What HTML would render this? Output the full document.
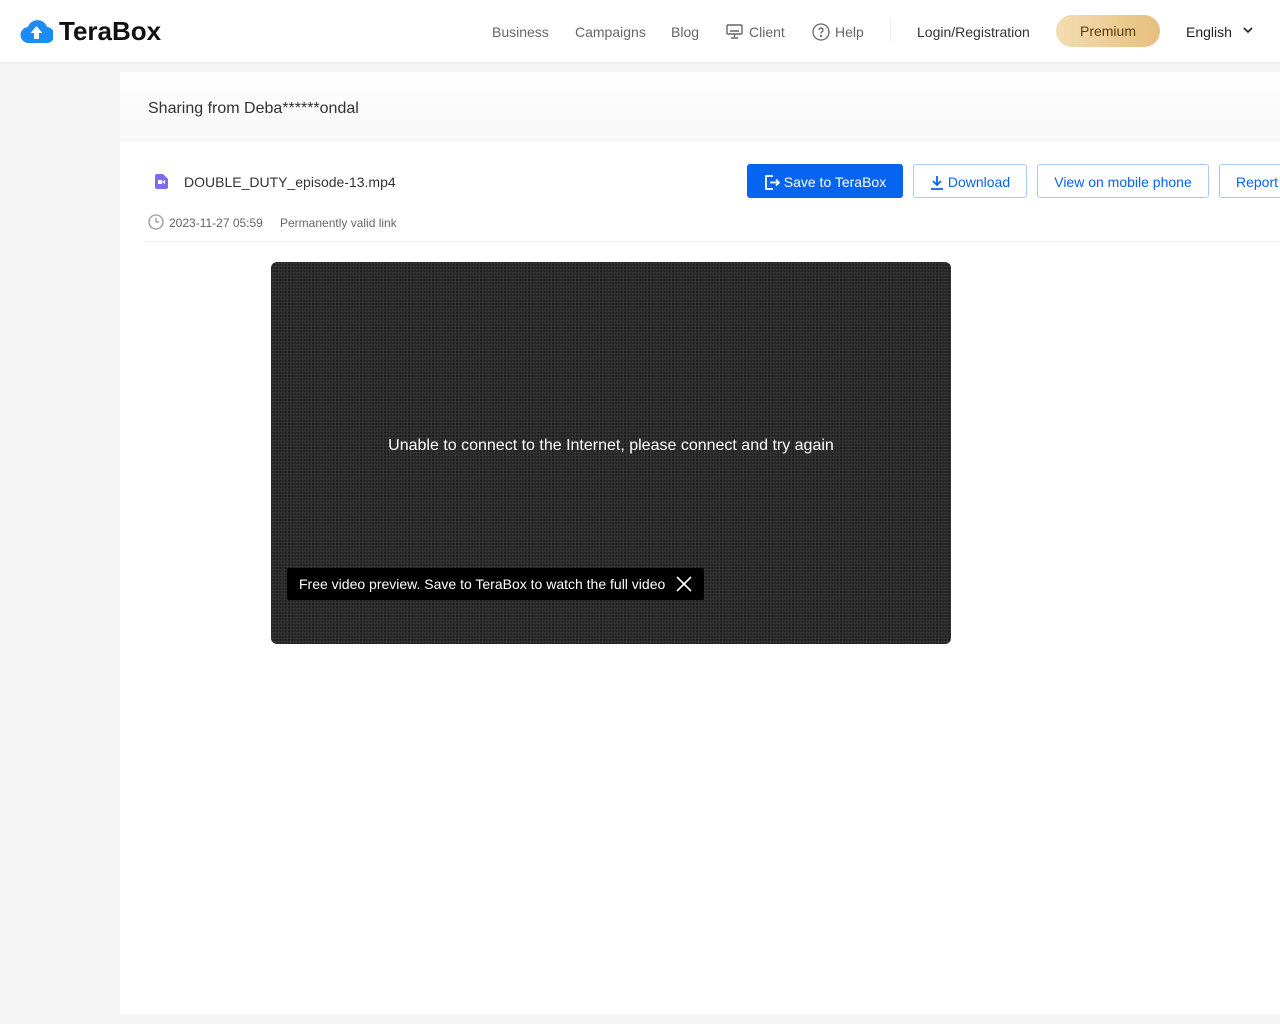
<!DOCTYPE html>
<html><head><meta charset="utf-8"><style>
*{margin:0;padding:0;box-sizing:border-box}
body{width:1280px;height:1024px;background:#f5f5f6;font-family:"Liberation Sans",sans-serif;position:relative;overflow:hidden}
.hdr{position:absolute;left:0;top:0;width:1280px;height:62px;background:#fff;box-shadow:0 1px 3px rgba(0,0,0,.05)}
.abs{position:absolute;white-space:nowrap}
.nav{font-size:14px;color:#666;top:24px}
.main{position:absolute;left:120px;top:72px;width:1160px;height:942px;background:#fff}
.top{position:absolute;left:0;top:0;width:1160px;height:70px;background:linear-gradient(#fff,#f7f7f8)}
.btn{position:absolute;top:164px;height:34px;border:1px solid #a8c8f5;border-radius:3px;color:#0664f0;font-size:14px;line-height:34px;text-align:center;background:#fff}
.btn svg{vertical-align:-3px;margin-right:4px}
.video{position:absolute;left:271px;top:262px;width:680px;height:382px;border-radius:6px;background:#262626;background-image:radial-gradient(#3a3a3a 1px,transparent 1px),radial-gradient(#1a1a1a 1px,transparent 1px);background-size:3px 3px,4px 4px}
</style></head><body>
<div class="hdr">
<svg class="abs" style="left:20px;top:17px" width="33" height="27" viewBox="0 0 33 27"><path d="M9 26a8 8 0 0 1-1-16A10 10 0 0 1 27 10a8 8 0 0 1-1 16Z" fill="#1b8cf5"/><path d="M16.5 9l-6 7h3.5v6h5v-6h3.5z" fill="#fff"/></svg>
<div class="abs" style="left:59px;top:16px;font-size:26px;font-weight:bold;color:#111">TeraBox</div>
<div class="abs nav" style="left:492px">Business</div>
<div class="abs nav" style="left:575px">Campaigns</div>
<div class="abs nav" style="left:671px">Blog</div>
<svg class="abs" style="left:726px;top:24px" width="17" height="15" viewBox="0 0 17 15" fill="none" stroke="#666" stroke-width="1.4"><rect x="1" y="1" width="15" height="9" rx="1"/><path d="M8.5 10v3M5 14h7M4 7h9"/></svg>
<div class="abs nav" style="left:749px">Client</div>
<svg class="abs" style="left:812px;top:23px" width="18" height="18" viewBox="0 0 18 18" fill="none" stroke="#666" stroke-width="1.3"><circle cx="9" cy="9" r="8"/><path d="M7 7a2 2 0 1 1 2.5 2c-.5.2-.5.6-.5 1.5"/><circle cx="9" cy="13" r=".5" fill="#666"/></svg>
<div class="abs nav" style="left:835px">Help</div>
<div class="abs" style="left:890px;top:20px;width:1px;height:22px;background:#eee"></div>
<div class="abs nav" style="left:917px;color:#333">Login/Registration</div>
<div class="abs" style="left:1056px;top:15px;width:104px;height:32px;border-radius:16px;background:linear-gradient(90deg,#f3ddb3,#e6bf7c);color:#5a3a10;font-size:14px;text-align:center;line-height:32px">Premium</div>
<div class="abs nav" style="left:1186px;color:#222">English</div>
<svg class="abs" style="left:1242px;top:26px" width="12" height="8" viewBox="0 0 12 8" fill="none" stroke="#222" stroke-width="1.6"><path d="M2 2l4 4 4-4"/></svg>
</div>
<div class="main"><div class="top"></div>
<div class="abs" style="left:28px;top:28px;font-size:16px;color:#333">Sharing from Deba******ondal</div>
<div class="abs" style="left:24px;top:169px;width:1136px;height:1px;background:#f0f0f0"></div>
</div>
<svg class="abs" style="left:155px;top:174px" width="13" height="15" viewBox="0 0 13 15"><path d="M2 0h6l5 5v8a2 2 0 0 1-2 2H2a2 2 0 0 1-2-2V2a2 2 0 0 1 2-2z" fill="#7d6bf0"/><rect x="3" y="6" width="4" height="4" fill="#fff"/><path d="M7 8l3-2v4z" fill="#fff"/></svg>
<div class="abs" style="left:184px;top:174px;font-size:14px;color:#333">DOUBLE_DUTY_episode-13.mp4</div>
<svg class="abs" style="left:148px;top:214px" width="16" height="16" viewBox="0 0 16 16" fill="none" stroke="#999" stroke-width="1.3"><circle cx="8" cy="8" r="7"/><path d="M8 4v4h3"/></svg>
<div class="abs" style="left:169px;top:216px;font-size:12px;color:#666">2023-11-27 05:59</div>
<div class="abs" style="left:280px;top:216px;font-size:12px;color:#666">Permanently valid link</div>
<div class="btn" style="left:747px;width:156px;background:#0664f0;border-color:#0664f0;color:#fff"><svg width="16" height="15" viewBox="0 0 16 15" fill="none" stroke="#fff" stroke-width="1.8"><path d="M9 1H2v13h7M6 7.5h9M12 4.5l3 3-3 3"/></svg>Save to TeraBox</div>
<div class="btn" style="left:913px;width:114px"><svg width="14" height="15" viewBox="0 0 14 15" fill="none" stroke="#0664f0" stroke-width="1.8"><path d="M7 1v9M3 6l4 4 4-4M1 14h12"/></svg>Download</div>
<div class="btn" style="left:1037px;width:172px">View on mobile phone</div>
<div class="btn" style="left:1219px;width:70px;text-align:left;padding-left:16px">Report</div>
<div class="video">
<div class="abs" style="left:0;width:680px;top:175px;text-align:center;color:#fff;font-size:16px">Unable to connect to the Internet, please connect and try again</div>
<div class="abs" style="left:16px;top:306px;width:417px;height:32px;background:#000;color:#fff;font-size:14px;line-height:32px;padding-left:12px;border-radius:2px">Free video preview. Save to TeraBox to watch the full video<svg style="position:absolute;right:12px;top:8px" width="16" height="16" viewBox="0 0 16 16" stroke="#fff" stroke-width="1.6"><path d="M1 1l14 14M15 1L1 15"/></svg></div>
</div>
</body></html>
